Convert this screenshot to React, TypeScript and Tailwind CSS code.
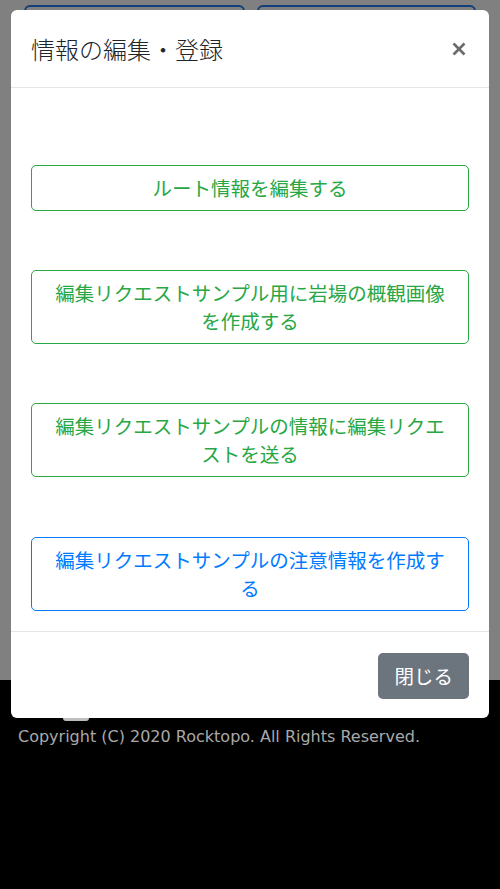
import React from "react";

const jp = "font-['Noto_Sans_CJK_JP','Noto_Sans',sans-serif]";

function ActionButton({ label, tone }: { label: string; tone: "green" | "blue" }) {
  const cls =
    tone === "green"
      ? "border-[#28a745] text-[#28a745]"
      : "border-[#007bff] text-[#007bff]";
  return (
    <button
      className={`block w-full rounded-[5px] border bg-white px-4 py-2 text-center text-[19.5px] leading-[28px] ${cls}`}
    >
      {label}
    </button>
  );
}

export default function App() {
  return (
    <div className={`relative h-[889px] w-full overflow-hidden bg-[#808080] ${jp}`}>
      {/* dimmed page behind the modal */}
      <div className="flex h-[889px] flex-col">
        <div className="flex h-[680px] gap-[12px] pl-[24px] pr-[24px] pt-[5px]">
          <div className="h-[56px] w-[221px] rounded-[6px] border-2 border-[#123f7c]" />
          <div className="h-[56px] w-[220px] rounded-[6px] border-2 border-[#123f7c]" />
        </div>
        <footer className="flex-1 bg-black px-[18px] pt-[17px]">
          <div className="ml-[45px] h-[24px] w-[26px] rounded-[3px] bg-[#bdbdbd]" />
          <p className="mt-[4px] font-['DejaVu_Sans',sans-serif] text-[16px] leading-[24px] text-[#a9a9a9]">
            Copyright (C) 2020 Rocktopo. All Rights Reserved.
          </p>
        </footer>
      </div>

      {/* modal */}
      <div className="absolute left-[11px] top-[10px] w-[478px] rounded-[6px] bg-white">
        <div className="flex h-[78px] items-center justify-between border-b border-[#e4e6e9] pl-[20px] pr-[20px]">
          <h5 className="text-[24px] leading-[36px] font-light text-[#212529]">情報の編集・登録</h5>
          <button aria-label="閉じる" className="flex h-[20px] w-[20px] items-center justify-center">
            <svg width="14" height="14" viewBox="0 0 14 14">
              <path d="M1.5 1.5 L12.5 12.5 M12.5 1.5 L1.5 12.5" stroke="#6b6b6b" strokeWidth="2.6" strokeLinecap="butt" />
            </svg>
          </button>
        </div>
        <div className="flex flex-col px-[20px] pb-[20px] pt-[77px]">
          <ActionButton label="ルート情報を編集する" tone="green" />
          <div className="mt-[59px]">
            <ActionButton label="編集リクエストサンプル用に岩場の概観画像を作成する" tone="green" />
          </div>
          <div className="mt-[59px]">
            <ActionButton label="編集リクエストサンプルの情報に編集リクエストを送る" tone="green" />
          </div>
          <div className="mt-[60px]">
            <ActionButton label="編集リクエストサンプルの注意情報を作成する" tone="blue" />
          </div>
        </div>
        <div className="flex justify-end border-t border-[#e4e6e9] pb-[19px] pr-[20px] pt-[21px]">
          <button className="rounded-[5px] bg-[#6c757d] px-4 py-[9px] text-[19.5px] leading-[28px] text-white">
            閉じる
          </button>
        </div>
      </div>
    </div>
  );
}
